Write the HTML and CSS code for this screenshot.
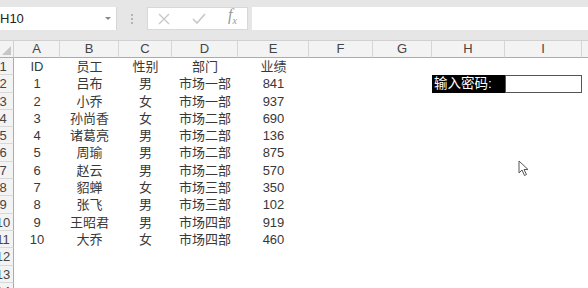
FILE: index.html
```html
<!DOCTYPE html>
<html lang="zh">
<head>
    <meta charset="UTF-8">
    <title>Sheet</title>
    <link rel="stylesheet" href="styles.css">
</head>
<body>
    <div class="toolbar">
        <div class="name-box">
            <span>H10</span>
            <span class="drop"></span>
        </div>
        <div class="grip">
            <i></i><i></i><i></i>
        </div>
        <div class="fx-buttons">
            <svg width="12" height="12" viewBox="0 0 12 12"><path d="M1 1 L11 11 M11 1 L1 11" stroke="#c8c8c8" stroke-width="1.4" fill="none"/></svg>
            <svg width="14" height="12" viewBox="0 0 14 12"><path d="M1 6 L5 10 L13 1" stroke="#c8c8c8" stroke-width="1.6" fill="none"/></svg>
            <span class="fx">f<sub>x</sub></span>
        </div>
        <div class="formula"></div>
    </div>

    <div class="sheet" id="sheet">
        <div class="corner"><span></span></div>
        <div class="col-hd">A</div>
        <div class="col-hd">B</div>
        <div class="col-hd">C</div>
        <div class="col-hd">D</div>
        <div class="col-hd">E</div>
        <div class="col-hd">F</div>
        <div class="col-hd">G</div>
        <div class="col-hd">H</div>
        <div class="col-hd">I</div>
        <div class="col-hd last"></div>
    </div>

    <svg class="cursor" width="12" height="18" viewBox="0 0 12 18">
        <path d="M1 1 L1 13 L4 10 L6.5 15.5 L8.5 14.5 L6 9.5 L10 9.5 Z" fill="#fff" stroke="#555" stroke-width="1"/>
    </svg>

    <script>
        var rows = [
            ['ID', '员工', '性别', '部门', '业绩'],
            ['1', '吕布', '男', '市场一部', '841'],
            ['2', '小乔', '女', '市场一部', '937'],
            ['3', '孙尚香', '女', '市场二部', '690'],
            ['4', '诸葛亮', '男', '市场二部', '136'],
            ['5', '周瑜', '男', '市场二部', '875'],
            ['6', '赵云', '男', '市场二部', '570'],
            ['7', '貂蝉', '女', '市场三部', '350'],
            ['8', '张飞', '男', '市场三部', '102'],
            ['9', '王昭君', '男', '市场四部', '919'],
            ['10', '大乔', '女', '市场四部', '460'],
            [], [], []
        ];
        var sheet = document.getElementById('sheet');
        var html = '';
        for (var r = 0; r < rows.length; r++) {
            html += '<div class="row-hd"><span>' + (r + 1) + '</span></div>';
            for (var c = 0; c < 9; c++) {
                var text = rows[r][c] || '';
                var cls = 'cell';
                if (r == 1 && c == 7) { cls += ' pw-label'; text = '输入密码:'; }
                if (r == 1 && c == 8) { cls += ' pw-input'; }
                html += '<div class="' + cls + '">' + text + '</div>';
            }
            html += '<div class="cell"></div>';
        }
        sheet.innerHTML += html;
    </script>
</body>
</html>
```

FILE: styles.css
```css
body {
    margin: 0;
    width: 588px;
    height: 288px;
    overflow: hidden;
    background-color: #fff;
    font-family: "Liberation Sans", "Noto Sans CJK SC", sans-serif;
    position: relative;
}
.toolbar {
    height: 40px;
    background-color: #e6e6e6;
    box-sizing: border-box;
    padding-top: 7px;
    display: flex;
    align-items: flex-start;
}
.name-box {
    width: 117px;
    height: 23px;
    background-color: #fff;
    border-right: 1px solid #d6d6d6;
    box-sizing: border-box;
    display: flex;
    align-items: center;
    justify-content: space-between;
    font-size: 13px;
    color: #222;
    padding-right: 5px;
}
.drop {
    width: 0;
    height: 0;
    border-left: 3px solid transparent;
    border-right: 3px solid transparent;
    border-top: 3px solid #888;
}
.grip {
    width: 30px;
    height: 23px;
    display: flex;
    flex-direction: column;
    align-items: center;
    justify-content: center;
    gap: 2px;
}
.grip i {
    width: 2px;
    height: 2px;
    background-color: #b4b4b4;
}
.fx-buttons {
    width: 101px;
    height: 23px;
    background-color: #fff;
    box-sizing: border-box;
    border: 1px solid #d8d8d8;
    display: flex;
    align-items: center;
    justify-content: space-between;
    padding: 0 10px 0 10px;
}
.fx {
    font-family: "Liberation Serif", serif;
    font-style: italic;
    font-size: 16px;
    color: #999;
    line-height: 16px;
}
.fx sub {
    font-size: 10px;
}
.formula {
    flex: 1;
    height: 23px;
    margin-left: 4px;
    background-color: #fff;
}
.sheet {
    display: grid;
    grid-template-columns: 14px 46px 59px 53px 66px 71px 64px 59px 73px 77px 6px;
    grid-template-rows: 17px;
    grid-auto-rows: 17.3px;
    border-top: 1px solid #d0d0d0;
}
.corner {
    background-color: #f3f3f3;
    border-bottom: 1px solid #ababab;
    border-right: 1px solid #d0d0d0;
    position: relative;
}
.corner span {
    position: absolute;
    right: 2px;
    bottom: 2px;
    width: 0;
    height: 0;
    border-left: 9px solid transparent;
    border-bottom: 9px solid #c6c6c6;
}
.col-hd {
    background-color: #f3f3f3;
    border-bottom: 1px solid #ababab;
    border-right: 1px solid #d6d6d6;
    font-size: 13px;
    color: #444;
    text-align: center;
    line-height: 16px;
}
.col-hd.last {
    border-right: none;
}
.row-hd {
    background-color: #f3f3f3;
    border-bottom: 1px solid #d8d8d8;
    border-right: 1px solid #ababab;
    overflow: hidden;
    font-size: 13px;
    color: #444;
    line-height: 17px;
    position: relative;
}
.row-hd span {
    display: block;
    width: 20px;
    margin-left: -7px;
    text-align: center;
}
.cell {
    font-size: 13px;
    color: #383838;
    text-align: center;
    line-height: 17px;
    white-space: nowrap;
}
.pw-label {
    background-color: #000;
    color: #fff;
    text-align: left;
    padding-left: 2px;
    font-size: 13.5px;
}
.pw-input {
    border: 1px solid #555;
    box-sizing: border-box;
}
.cursor {
    position: absolute;
    left: 518px;
    top: 160px;
}
```
